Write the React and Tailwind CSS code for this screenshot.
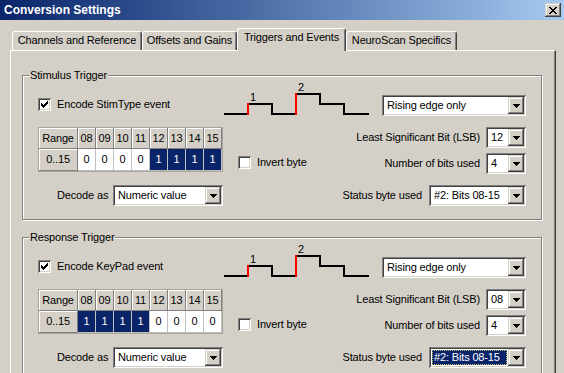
import React from "react";

// Win2000 classic palette
const SUNKEN =
  "shadow-[inset_1px_1px_0_#808080,inset_-1px_-1px_0_#fff,inset_2px_2px_0_#404040,inset_-2px_-2px_0_#d4d0c8]";
const RAISED =
  "shadow-[inset_-1px_-1px_0_#404040,inset_1px_1px_0_#d4d0c8,inset_-2px_-2px_0_#808080,inset_2px_2px_0_#fff]";

function Check({ checked }) {
  return (
    <div className={`w-[13px] h-[13px] shrink-0 bg-white flex items-center justify-center ${SUNKEN}`}>
      {checked && (
        <svg width="7" height="7" viewBox="0 0 7 7" shapeRendering="crispEdges">
          <path d="M0 2h1v1h1v1h1v-1h1v-1h1v-1h1v-1h1v3h-1v1h-1v1h-1v1h-1v1h-1v-1h-1v-1h-1z" fill="#000" />
        </svg>
      )}
    </div>
  );
}

function Arrow() {
  return (
    <svg width="7" height="4" viewBox="0 0 7 4" shapeRendering="crispEdges">
      <path d="M0 0h7v1h-1v1h-1v1h-1v1h-1v-1h-1v-1h-1v-1h-1z" fill="#000" />
    </svg>
  );
}

function Combo({ value, w, focus }) {
  return (
    <div className={`flex h-[21px] shrink-0 bg-white p-[2px] ${SUNKEN} ${w}`}>
      {focus ? (
        <div className="flex-1 flex items-center m-[1px] pl-[2px] bg-[#0a246a] text-white outline outline-1 outline-dotted outline-[#c8c060] -outline-offset-1">
          {value}
        </div>
      ) : (
        <div className="flex-1 flex items-center pl-[3px]">{value}</div>
      )}
      <div className={`w-[16px] h-full bg-[#d4d0c8] flex items-center justify-center ${RAISED}`}>
        <Arrow />
      </div>
    </div>
  );
}

function Wave() {
  // steps: low 32, high1 22, high2 12 (svg coords)
  return (
    <svg width="146" height="34" viewBox="0 0 146 34" className="shrink-0" shapeRendering="crispEdges">
      <path d="M0 32H24M24 22H48V32H72M72 12H96V22H120V32H145" stroke="#000" strokeWidth="2" fill="none" />
      <path d="M24 33V21M72 33V11" stroke="#ff0000" strokeWidth="2" fill="none" />
      <text x="29" y="19" fontSize="11" textAnchor="middle" fontFamily="Liberation Sans, Arial, sans-serif">1</text>
      <text x="77" y="9" fontSize="11" textAnchor="middle" fontFamily="Liberation Sans, Arial, sans-serif">2</text>
    </svg>
  );
}

const HEAD = "flex items-center justify-center bg-[#d4d0c8] border-r border-b border-[#808080] shadow-[inset_1px_1px_0_#fff]";

function BitTable({ bits }) {
  const cols = ["08", "09", "10", "11", "12", "13", "14", "15"];
  return (
    <div className="grid grid-cols-[39px_repeat(8,18px)] grid-rows-[21px_22px] w-[185px] h-[45px] shrink-0 border border-[#a8a49c]">
      <div className={HEAD}>Range</div>
      {cols.map(c => (
        <div key={c} className={HEAD}>{c}</div>
      ))}
      <div className={HEAD}>0..15</div>
      {bits.map((b, i) => (
        <div
          key={i}
          className={`flex items-center justify-center border-r border-b border-[#c0c0c0] ${
            b ? "bg-[#0a246a] text-white" : "bg-white"
          }`}
        >
          {b}
        </div>
      ))}
    </div>
  );
}

function Group({ title, event, bits, lsb, focus, className }) {
  return (
    <div className={`relative w-[520px] h-[145px] shrink-0 border border-[#808080] shadow-[inset_1px_1px_0_#fff,1px_1px_0_#fff] ${className || ""}`}>
      <span className="absolute left-[6px] -top-[8px] px-[1px] bg-[#d4d0c8] leading-[14px]">{title}</span>

      {/* Row 1: encode checkbox, waveform, edge mode */}
      <div className="flex mt-[6px] h-[34px]">
        <div className="flex items-center gap-[6px] ml-[15px] w-[186px] h-[13px] mt-[16px]">
          <Check checked />
          <span>{event}</span>
        </div>
        <Wave />
        <div className="ml-[12px] mt-[13px]">
          <Combo value="Rising edge only" w="w-[144px]" />
        </div>
      </div>

      {/* Row 2: bit table, invert, LSB / bit count */}
      <div className="flex mt-[11px] h-[45px]">
        <div className="ml-[15px]">
          <BitTable bits={bits} />
        </div>
        <div className="flex items-center gap-[6px] ml-[15px] mt-[29px] h-[13px]">
          <Check />
          <span>Invert byte</span>
        </div>
        <div className="ml-auto mr-[15px] flex flex-col gap-[5px]">
          <div className="flex items-center justify-end gap-[6px]">
            <span>Least Significant Bit (LSB)</span>
            <Combo value={lsb} w="w-[40px]" />
          </div>
          <div className="flex items-center justify-end gap-[6px]">
            <span>Number of bits used</span>
            <Combo value="4" w="w-[40px]" />
          </div>
        </div>
      </div>

      {/* Row 3: decode / status byte */}
      <div className="flex items-center mt-[13px] h-[21px]">
        <span className="ml-[34px] w-[56px]">Decode as</span>
        <Combo value="Numeric value" w="w-[110px]" />
        <div className="ml-auto mr-[15px] flex items-center gap-[7px]">
          <span>Status byte used</span>
          <Combo value="#2: Bits 08-15" w="w-[97px]" focus={focus} />
        </div>
      </div>
    </div>
  );
}

function Tab({ label, active, w }) {
  if (active) {
    return (
      <div className={`relative z-10 -mb-[1px] h-[23px] ${w} shrink-0 bg-[#d4d0c8] border-l border-t border-white border-r border-r-[#404040] rounded-t-[3px] shadow-[inset_-1px_0_0_#808080] flex justify-center pt-[2px]`}>
        {label}
      </div>
    );
  }
  return (
    <div className={`h-[19px] ${w} shrink-0 bg-[#d4d0c8] border-l border-t border-white border-r border-r-[#404040] rounded-t-[3px] shadow-[inset_-1px_0_0_#808080] flex justify-center pt-[2px]`}>
      {label}
    </div>
  );
}

const X_PIX = [
  [0, 0], [1, 0], [6, 0], [7, 0],
  [1, 1], [2, 1], [5, 1], [6, 1],
  [2, 2], [3, 2], [4, 2], [5, 2],
  [3, 3], [4, 3],
  [2, 4], [3, 4], [4, 4], [5, 4],
  [1, 5], [2, 5], [5, 5], [6, 5],
  [0, 6], [1, 6], [6, 6], [7, 6],
];

export default function App() {
  return (
    <div className="w-[564px] h-[373px] overflow-hidden bg-[#d4d0c8] text-[11px] leading-[13px] tracking-[-0.15px] text-black font-['Liberation_Sans',Arial,sans-serif] flex flex-col">
      {/* Title bar */}
      <div className="h-[20px] shrink-0 flex items-center justify-between pl-[4px] pr-[3px] bg-gradient-to-r from-[#0a246a] to-[#a6caf0]">
        <span className="text-white font-bold text-[12px] tracking-normal">Conversion Settings</span>
        <div className={`w-[16px] h-[14px] bg-[#d4d0c8] flex items-center justify-center ${RAISED}`}>
          <svg width="8" height="7" viewBox="0 0 8 7" shapeRendering="crispEdges">
            {X_PIX.map(([x, y]) => (
              <rect key={`${x}-${y}`} x={x} y={y} width="1" height="1" fill="#000" />
            ))}
          </svg>
        </div>
      </div>

      <div className="pt-[8px] flex flex-col flex-1">
        {/* Tabs */}
        <div className="flex items-end h-[22px] pl-[12px]">
          <Tab label="Channels and Reference" w="w-[130px]" />
          <Tab label="Offsets and Gains" w="w-[95px]" />
          <Tab label="Triggers and Events" w="w-[109px]" active />
          <Tab label="NeuroScan Specifics" w="w-[111px]" />
        </div>

        {/* Tab page */}
        <div className="ml-[10px] w-[546px] flex-1 flex flex-col border-l border-t border-white border-r border-r-[#404040] shadow-[inset_-1px_0_0_#808080] pt-[24px] pl-[11px]">
          <Group
            title="Stimulus Trigger"
            event="Encode StimType event"
            bits={[0, 0, 0, 0, 1, 1, 1, 1]}
            lsb="12"
          />
          <Group
            title="Response Trigger"
            event="Encode KeyPad event"
            bits={[1, 1, 1, 1, 0, 0, 0, 0]}
            lsb="08"
            focus
            className="mt-[17px]"
          />
        </div>
      </div>
    </div>
  );
}
